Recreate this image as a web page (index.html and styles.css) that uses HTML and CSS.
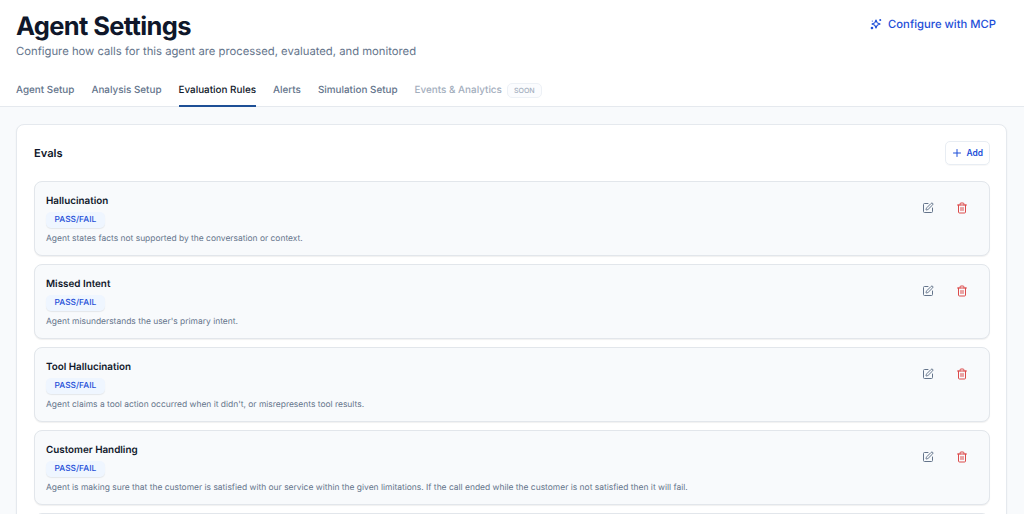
FILE: index.html
```html
<!DOCTYPE html>
<html lang="en">
<head>
  <meta charset="UTF-8">
  <meta name="viewport" content="width=device-width, initial-scale=1.0">
  <title>Agent Settings</title>
  <link rel="stylesheet" href="styles.css">
</head>
<body>
  <!-- Shared icons -->
  <svg width="0" height="0" class="icon-defs">
    <symbol id="icon-edit" viewBox="0 0 24 24">
      <path d="M12 3H5a2 2 0 0 0-2 2v14a2 2 0 0 0 2 2h14a2 2 0 0 0 2-2v-7"/>
      <path d="M18.375 2.625a1 1 0 0 1 3 3l-9.013 9.014a2 2 0 0 1-.853.505l-2.873.84a.5.5 0 0 1-.62-.62l.84-2.873a2 2 0 0 1 .506-.852z"/>
    </symbol>
    <symbol id="icon-trash" viewBox="0 0 24 24">
      <path d="M3 6h18"/>
      <path d="M19 6v14a2 2 0 0 1-2 2H7a2 2 0 0 1-2-2V6"/>
      <path d="M8 6V4a2 2 0 0 1 2-2h4a2 2 0 0 1 2 2v2"/>
      <path d="M10 11v6"/>
      <path d="M14 11v6"/>
    </symbol>
  </svg>

  <header class="page-header">
    <div class="header-top">
      <div>
        <h1>Agent Settings</h1>
        <p class="subtitle">Configure how calls for this agent are processed, evaluated, and monitored</p>
      </div>
      <a class="mcp-link" href="#">
        <svg class="icon mcp-icon" viewBox="0 0 24 24">
          <path d="M12 4l1.9 4.6a3 3 0 0 0 1.5 1.5L20 12l-4.6 1.9a3 3 0 0 0-1.5 1.5L12 20l-1.9-4.6a3 3 0 0 0-1.5-1.5L4 12l4.6-1.9a3 3 0 0 0 1.5-1.5z"/>
          <path d="M20.5 3v2"/>
          <path d="M19.5 4h2"/>
          <path d="M4.5 6v.1"/>
          <circle cx="4" cy="20" r="1.5"/>
        </svg>
        Configure with MCP
      </a>
    </div>
    <nav class="tabs">
      <a class="tab" href="#">Agent Setup</a>
      <a class="tab" href="#">Analysis Setup</a>
      <a class="tab active" href="#">Evaluation Rules</a>
      <a class="tab" href="#">Alerts</a>
      <a class="tab" href="#">Simulation Setup</a>
      <span class="tab disabled">Events &amp; Analytics <span class="soon">SOON</span></span>
    </nav>
  </header>

  <main class="content">
    <section class="panel">
      <div class="panel-header">
        <h2>Evals</h2>
        <button class="add-btn">
          <svg class="icon" viewBox="0 0 24 24"><path d="M5 12h14"/><path d="M12 5v14"/></svg>
          Add
        </button>
      </div>

      <div class="eval-list">
        <article class="eval">
          <div class="eval-body">
            <h3>Hallucination</h3>
            <span class="badge">PASS/FAIL</span>
            <p>Agent states facts not supported by the conversation or context.</p>
          </div>
          <div class="eval-actions">
            <button class="icon-btn"><svg class="icon"><use href="#icon-edit"/></svg></button>
            <button class="icon-btn delete"><svg class="icon"><use href="#icon-trash"/></svg></button>
          </div>
        </article>

        <article class="eval">
          <div class="eval-body">
            <h3>Missed Intent</h3>
            <span class="badge">PASS/FAIL</span>
            <p>Agent misunderstands the user's primary intent.</p>
          </div>
          <div class="eval-actions">
            <button class="icon-btn"><svg class="icon"><use href="#icon-edit"/></svg></button>
            <button class="icon-btn delete"><svg class="icon"><use href="#icon-trash"/></svg></button>
          </div>
        </article>

        <article class="eval">
          <div class="eval-body">
            <h3>Tool Hallucination</h3>
            <span class="badge">PASS/FAIL</span>
            <p>Agent claims a tool action occurred when it didn't, or misrepresents tool results.</p>
          </div>
          <div class="eval-actions">
            <button class="icon-btn"><svg class="icon"><use href="#icon-edit"/></svg></button>
            <button class="icon-btn delete"><svg class="icon"><use href="#icon-trash"/></svg></button>
          </div>
        </article>

        <article class="eval">
          <div class="eval-body">
            <h3>Customer Handling</h3>
            <span class="badge">PASS/FAIL</span>
            <p>Agent is making sure that the customer is satisfied with our service within the given limitations. If the call ended while the customer is not satisfied then it will fail.</p>
          </div>
          <div class="eval-actions">
            <button class="icon-btn"><svg class="icon"><use href="#icon-edit"/></svg></button>
            <button class="icon-btn delete"><svg class="icon"><use href="#icon-trash"/></svg></button>
          </div>
        </article>

        <article class="eval"></article>
      </div>
    </section>
  </main>
</body>
</html>
```
FILE: styles.css
```css
* {
  margin: 0;
  padding: 0;
  box-sizing: border-box;
}
body {
  height: 100vh;
  overflow: hidden;
  background: #f8fafc;
  font-family: Inter, "Liberation Sans", sans-serif;
  color: #0f172a;
  text-rendering: geometricPrecision;
}
a {
  color: inherit;
  text-decoration: none;
}
button {
  font-family: inherit;
  background: none;
  border: none;
  cursor: pointer;
}
.icon-defs {
  display: none;
}
.icon {
  width: 12px;
  height: 12px;
  fill: none;
  stroke: currentColor;
  stroke-width: 2;
  stroke-linecap: round;
  stroke-linejoin: round;
}

/* Header */
.page-header {
  height: 107px;
  padding: 11px 16px 0;
  background: #fff;
  border-bottom: 1px solid #e5e9ee;
}
.header-top {
  display: flex;
  justify-content: space-between;
  align-items: flex-start;
  height: 63px;
}
h1 {
  font-size: 25.5px;
  line-height: 32px;
  font-weight: 700;
  letter-spacing: -0.64px;
}
.subtitle {
  font-size: 11.28px;
  line-height: 17px;
  color: #64748b;
}
.mcp-link {
  display: flex;
  align-items: center;
  gap: 6px;
  margin-top: 5px;
  padding-right: 12px;
  font-size: 11.25px;
  line-height: 16px;
  font-weight: 500;
  color: #1d4ed8;
}
.mcp-icon {
  stroke-width: 2.3;
}

/* Tabs */
.tabs {
  display: flex;
  gap: 17px;
  height: 33px;
}
.tab {
  display: flex;
  align-items: center;
  padding-top: 1px;
  font-size: 9.9px;
  font-weight: 500;
  color: #64748b;
  border-bottom: 2px solid transparent;
}
.tab.active {
  color: #0f172a;
  border-bottom-color: #1e5096;
}
.tab.disabled {
  color: #a3aebd;
}
.soon {
  margin-left: 5px;
  padding: 0 6px;
  border: 1px solid #edf1f6;
  border-radius: 5px;
  background: #fbfcfe;
  font-size: 7.1px;
  line-height: 13px;
}

/* Evals panel */
.content {
  padding: 17px 17px 0 16px;
}
.panel {
  padding: 16px 16px 16px 17px;
  background: #fff;
  border: 1px solid #e5e9ee;
  border-radius: 8px;
  box-shadow: 0 1px 2px rgba(0, 0, 0, 0.06);
}
.panel-header {
  display: flex;
  justify-content: space-between;
  align-items: center;
  height: 24px;
  margin-bottom: 16px;
}
h2 {
  font-size: 11.1px;
  font-weight: 600;
}
.add-btn {
  display: flex;
  align-items: center;
  gap: 3px;
  height: 24px;
  padding: 0 6px 0 5px;
  border: 1px solid #e8edf3;
  border-radius: 5px;
  box-shadow: 0 1px 1px rgba(0, 0, 0, 0.03);
  font-size: 8.45px;
  font-weight: 600;
  color: #1d4ed8;
}
.eval-list {
  display: flex;
  flex-direction: column;
  gap: 8px;
}
.eval {
  display: flex;
  justify-content: space-between;
  height: 75px;
  padding: 12px 11px 10px;
  background: #f8fafc;
  border: 1px solid #e2e6eb;
  border-radius: 8px;
  box-shadow: 0 1px 1px rgba(0, 0, 0, 0.06);
}
.eval h3 {
  font-size: 9.85px;
  line-height: 14px;
  font-weight: 600;
}
.eval p {
  margin-top: 5px;
  font-size: 8.45px;
  line-height: 12px;
  color: #64748b;
}
.badge {
  display: block;
  width: fit-content;
  margin-top: 4px;
  padding: 0 8.5px;
  border-radius: 5px;
  background: #eff6ff;
  box-shadow: 0 1px 1px rgba(15, 23, 42, 0.08);
  font-size: 8.4px;
  line-height: 16px;
  font-weight: 500;
  color: #1d4ed8;
}
.eval-actions {
  display: flex;
  gap: 11px;
  padding-right: 5px;
}
.icon-btn {
  display: flex;
  align-items: center;
  justify-content: center;
  width: 23px;
  height: 24px;
  margin-top: 2px;
  color: #64748b;
}
.icon-btn.delete {
  color: #dc4a4a;
}
```
